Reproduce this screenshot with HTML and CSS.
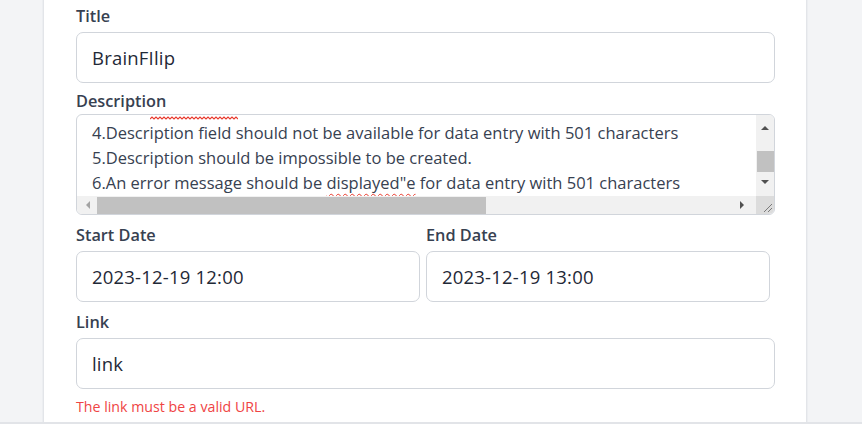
FILE: index.html
```html
<!DOCTYPE html>
<html lang="en">
<head>
<meta charset="utf-8">
<title>Edit event</title>
<link rel="stylesheet" href="styles.css">
</head>
<body>
<div class="page">
  <div class="card">
    <div class="field field-title">
      <label class="label">Title</label>
      <div class="input">BrainFIlip</div>
    </div>
    <div class="field">
      <label class="label label-desc">Description</label>
      <div class="textarea">
        <div class="ta-content">
          <svg class="ta-squiggle" width="88" height="4" viewBox="0 0 88 4" aria-hidden="true"><path d="M0 3 L2 1 L4 3 L6 1 L8 3 L10 1 L12 3 L14 1 L16 3 L18 1 L20 3 L22 1 L24 3 L26 1 L28 3 L30 1 L32 3 L34 1 L36 3 L38 1 L40 3 L42 1 L44 3 L46 1 L48 3 L50 1 L52 3 L54 1 L56 3 L58 1 L60 3 L62 1 L64 3 L66 1 L68 3 L70 1 L72 3 L74 1 L76 3 L78 1 L80 3 L82 1 L84 3 L86 1 L88 3" stroke="#e8392c" stroke-width="1.1" fill="none"/></svg>
          <div class="ta-line">4.Description field should not be available for data entry with 501 characters</div>
          <div class="ta-line">5.Description should be impossible to be created.</div>
          <div class="ta-line">6.An error message should be <span class="typo">displayed"e</span> for data entry with 501 characters</div>
        </div>
        <div class="vbar">
          <span class="arrow arrow-up"></span>
          <span class="vthumb"></span>
          <span class="arrow arrow-down"></span>
        </div>
        <div class="hbar">
          <span class="arrow arrow-left"></span>
          <span class="hthumb"></span>
          <span class="hspace"></span>
          <span class="arrow arrow-right"></span>
        </div>
        <div class="corner">
          <svg width="18" height="18" viewBox="0 0 18 18" aria-hidden="true"><path d="M8 16 L16 8 M12 16 L16 12" stroke="#7a7a7a" stroke-width="1" fill="none"/></svg>
        </div>
      </div>
    </div>
    <div class="field date-row">
      <div>
        <label class="label">Start Date</label>
        <div class="input">2023-12-19 12:00</div>
      </div>
      <div>
        <label class="label">End Date</label>
        <div class="input">2023-12-19 13:00</div>
      </div>
    </div>
    <div class="field">
      <label class="label">Link</label>
      <div class="input">link</div>
      <p class="error">The link must be a valid URL.</p>
    </div>
  </div>
</div>
</body>
</html>
```
FILE: styles.css
```css
* { box-sizing: border-box; }
html, body { margin: 0; padding: 0; }
body {
  background: #f3f4f6;
  font-family: "Open Sans", "Noto Sans", sans-serif;
  color: #374151;
}
.page {
  height: 424px;
  overflow: hidden;
  border-bottom: 2px solid #e2e4e8;
}
.card {
  margin-left: 43px;
  width: 764px;
  height: 100%;
  background: #fff;
  border-left: 1px solid #e3e5e9;
  border-right: 1px solid #e3e5e9;
  box-shadow: 0 0 0 1px #eceef1;
  padding: 6px 31px 0 32px;
}
.field { margin-bottom: 10px; }
.field-title { margin-bottom: 8px; }
.label {
  display: block;
  font-size: 16.3px;
  line-height: 20px;
  font-weight: 600;
  color: #374151;
  margin-bottom: 6px;
}
.label-desc { margin-bottom: 3px; }
.input {
  height: 51px;
  border: 1px solid #d1d5db;
  border-radius: 7px;
  padding: 0 15px;
  display: flex;
  align-items: center;
  font-size: 18.5px;
  letter-spacing: 0.2px;
  color: #1f2937;
  background: #fff;
}
.textarea {
  height: 101px;
  border: 1px solid #d1d5db;
  border-radius: 6px;
  overflow: hidden;
  display: grid;
  grid-template-columns: 1fr 18px;
  grid-template-rows: 81px 18px;
  background: #fff;
}
.ta-content {
  overflow: hidden;
  padding-left: 15px;
  color: #374151;
  font-size: 16.5px;
  line-height: 25px;
  white-space: nowrap;
}
.ta-squiggle {
  display: block;
  margin: 1px 0 0 58px;
  width: 88px;
  height: 4px;
}
.typo {
  text-decoration: underline wavy #e8392c;
  text-decoration-thickness: 1px;
  text-underline-offset: 4px;
}
.vbar {
  background: #f1f1f1;
  display: flex;
  flex-direction: column;
  align-items: center;
}
.hbar {
  background: #f1f1f1;
  display: flex;
  align-items: center;
}
.corner {
  background: #dcdcdc;
  display: flex;
}
.arrow { width: 0; height: 0; display: block; }
.arrow-up {
  margin-top: 11px;
  border-left: 4px solid transparent;
  border-right: 4px solid transparent;
  border-bottom: 4px solid #505050;
}
.arrow-down {
  margin-top: 8px;
  border-left: 4px solid transparent;
  border-right: 4px solid transparent;
  border-top: 4px solid #505050;
}
.arrow-left {
  margin-left: 9px;
  border-top: 4px solid transparent;
  border-bottom: 4px solid transparent;
  border-right: 4px solid #a3a3a3;
}
.arrow-right {
  margin-right: 12px;
  border-top: 4px solid transparent;
  border-bottom: 4px solid transparent;
  border-left: 4px solid #505050;
}
.vthumb {
  display: block;
  width: 17px;
  height: 21px;
  margin-top: 21px;
  background: #c1c1c1;
}
.hthumb {
  display: block;
  height: 17px;
  width: 389px;
  margin-left: 7px;
  background: #c1c1c1;
}
.hspace { flex: 1; }
.date-row {
  display: grid;
  grid-template-columns: 1fr 1fr;
  column-gap: 6px;
  width: 694px;
}
.error {
  margin: 8px 0 0;
  font-size: 14.2px;
  line-height: 20px;
  color: #ef4444;
}
```
